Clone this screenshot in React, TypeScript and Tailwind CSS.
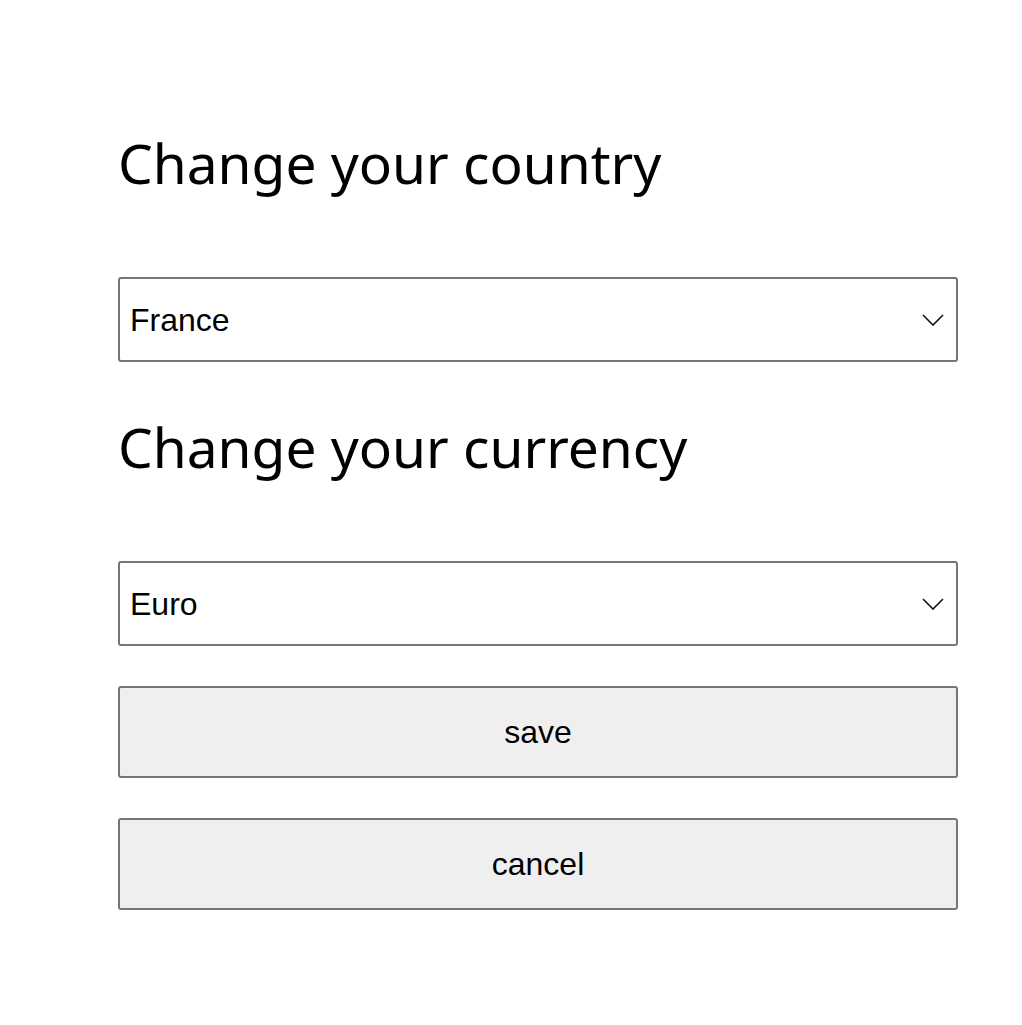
import React from 'react'

const Chevron = () => (
    <svg
        className="pointer-events-none absolute right-[14px] top-1/2 -translate-y-1/2"
        width="22"
        height="12"
        viewBox="0 0 22 12"
        fill="none"
        stroke="#111"
        strokeWidth="1.6"
    >
        <path d="M1 1l10 10L21 1" />
    </svg>
)

const Picker: React.FC<{ value: string; options: string[] }> = ({ value, options }) => (
    <div className="relative w-full">
        <select
            defaultValue={value}
            className="h-[85px] w-full appearance-none rounded-[3px] border-2 border-[#767676] bg-white pl-[10px] text-[32px] text-black font-['Liberation_Sans',Arial,sans-serif] outline-none"
        >
            {options.map((o) => (
                <option key={o}>{o}</option>
            ))}
        </select>
        <Chevron />
    </div>
)

export default function App() {
    return (
        <div className="min-h-screen bg-white">
            <div className="flex w-[840px] flex-col pl-0 ml-[118px] pt-[128px]">
                {/* country */}
                <h1 className="text-[55px] font-normal leading-[70px] text-black font-['Noto_Sans',sans-serif]">
                    Change your country
                </h1>
                <div className="mt-[79px]">
                    <Picker value="France" options={['France', 'Germany', 'Spain', 'Italy']} />
                </div>

                {/* currency */}
                <h1 className="mt-[50px] text-[55px] font-normal leading-[70px] text-black font-['Noto_Sans',sans-serif]">
                    Change your currency
                </h1>
                <div className="mt-[79px]">
                    <Picker value="Euro" options={['Euro', 'Dollar', 'Pound']} />
                </div>

                <div className="mt-[40px] flex flex-col gap-[40px]">
                    <button className="h-[92px] w-full rounded-[3px] border-2 border-[#767676] bg-[#efefef] text-[32px] text-black font-['Liberation_Sans',Arial,sans-serif]">
                        save
                    </button>
                    <button className="h-[92px] w-full rounded-[3px] border-2 border-[#767676] bg-[#efefef] text-[32px] text-black font-['Liberation_Sans',Arial,sans-serif]">
                        cancel
                    </button>
                </div>
            </div>
        </div>
    )
}
